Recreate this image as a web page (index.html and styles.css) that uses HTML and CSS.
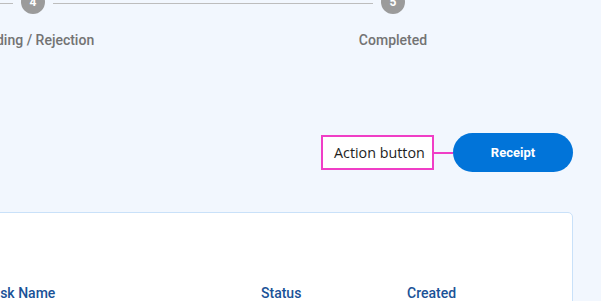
FILE: index.html
```html
<!DOCTYPE html>
<html lang="en">
<head>
<meta charset="utf-8">
<title>Order progress</title>
<link rel="stylesheet" href="styles.css">
</head>
<body>
<div class="page">
  <div class="stepper">
    <div class="step">
      <div class="track">
        <span class="line"></span>
        <span class="circle">4</span>
        <span class="line"></span>
      </div>
      <div class="label">Pending / Rejection</div>
    </div>
    <div class="step">
      <div class="track">
        <span class="line"></span>
        <span class="circle">5</span>
        <span class="line line-none"></span>
      </div>
      <div class="label">Completed</div>
    </div>
  </div>

  <div class="actions">
    <div class="annotation">Action button</div>
    <span class="connector"></span>
    <button class="btn-primary" type="button">Receipt</button>
  </div>

  <div class="card">
    <div class="table-head">
      <div class="th">Task Name</div>
      <div class="th">Status</div>
      <div class="th">Created</div>
    </div>
  </div>
</div>
</body>
</html>
```

FILE: styles.css
```css
* { box-sizing: border-box; }

html, body {
  margin: 0;
  height: 100%;
}

body {
  background: #f2f7fe;
  font-family: Roboto, "Liberation Sans", sans-serif;
  overflow: hidden;
}

.page {
  width: 573px;
}

.stepper {
  display: flex;
  margin-left: -147px;
  margin-top: -10px;
}

.step {
  width: 360px;
  display: flex;
  flex-direction: column;
  align-items: center;
}

.track {
  display: flex;
  align-items: center;
  width: 100%;
  gap: 8px;
}

.line {
  flex: 1;
  height: 1px;
  background: #bdbdbd;
  margin-top: 2px;
}

.line-none { background: transparent; }

.circle {
  width: 24px;
  height: 24px;
  border-radius: 50%;
  background: #9b9b9b;
  color: #fff;
  font-size: 12px;
  font-weight: 700;
  display: flex;
  align-items: center;
  justify-content: center;
  flex: none;
}

.label {
  margin-top: 16px;
  font-size: 14px;
  line-height: 20px;
  font-weight: 500;
  color: #737373;
  white-space: nowrap;
}

.actions {
  display: flex;
  justify-content: flex-end;
  align-items: center;
  margin-top: 83px;
  height: 39px;
}

.annotation {
  width: 113px;
  height: 35px;
  padding: 0 0 0 11px;
  border: 2px solid #f03ec6;
  background: #fff;
  color: #1e1e1e;
  font-family: "Open Sans", "Noto Sans", sans-serif;
  font-size: 14.3px;
  display: flex;
  align-items: center;
  white-space: nowrap;
}

.connector {
  width: 19px;
  height: 2px;
  background: #f03ec6;
}

.btn-primary {
  width: 120px;
  height: 39px;
  border: none;
  border-radius: 20px;
  background: #0174d9;
  color: #fff;
  font-family: Roboto, "Liberation Sans", sans-serif;
  font-size: 13px;
  font-weight: 700;
  padding: 0;
}

.card {
  margin-top: 40px;
  margin-left: -40px;
  width: 613px;
  height: 200px;
  background: #fff;
  border: 1px solid #c9e1f9;
  border-radius: 5px;
  padding: 70px 24px 0;
}

.table-head {
  display: grid;
  grid-template-columns: 276px 146px 1fr;
}

.th {
  font-size: 14px;
  line-height: 20px;
  font-weight: 500;
  color: #1a5297;
  white-space: nowrap;
}
```
